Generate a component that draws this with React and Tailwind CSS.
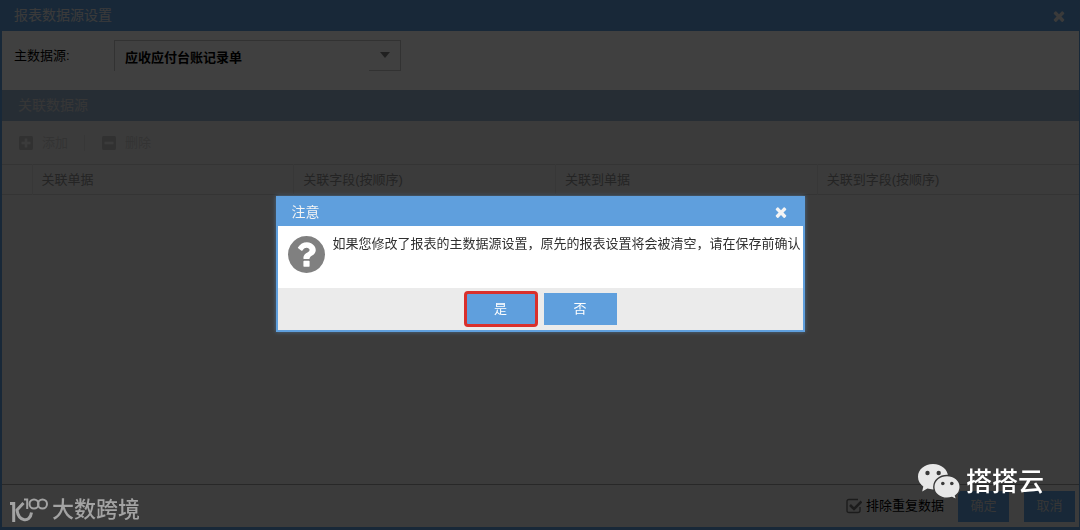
import { useState } from "react";
import { FaPlusSquare, FaMinusSquare } from "react-icons/fa";

const columns = ["关联单据", "关联字段(按顺序)", "关联到单据", "关联到字段(按顺序)"];

function CloseIcon() {
  return (
    <svg className="size-4" viewBox="0 0 1792 1792" fill="currentColor" aria-hidden="true">
      <path d="M1490 1322q0 40-28 68l-136 136q-28 28-68 28t-68-28l-294-294-294 294q-28 28-68 28t-68-28l-136-136q-28-28-28-68t28-68l294-294-294-294q-28-28-28-68t28-68l136-136q28-28 68-28t68 28l294 294 294-294q28-28 68-28t68 28l136 136q28 28 28 68t-28 68l-294 294 294 294q28 28 28 68z" />
    </svg>
  );
}

function QuestionIcon() {
  return (
    <svg className="mt-2.5 size-[37px] shrink-0 text-[#808080]" viewBox="128 128 1536 1536" fill="currentColor" aria-hidden="true">
      <path d="M1024 1376v-192q0-14-9-23t-23-9h-192q-14 0-23 9t-9 23v192q0 14 9 23t23 9h192q14 0 23-9t9-23zm256-672q0-88-55.500-163t-138.500-116-170-41q-243 0-371 213-15 24 8 42l132 100q7 6 19 6 16 0 25-12 53-68 86-92 34-24 86-24 48 0 85.500 26t37.500 59q0 38-20 61t-68 45q-63 28-115.500 86.500t-52.500 125.500v36q0 14 9 23t23 9h192q14 0 23-9t9-23q0-19 21.500-49.500t54.500-49.500q32-18 49-28.500t46-35 44.500-48 28-60.500 12.500-81zm384 192q0 209-103 385.500t-279.500 279.500-385.500 103-385.500-103-279.500-279.500-103-385.500 103-385.500 279.500-279.500 385.500-103 385.500 103 279.500 279.500 103 385.500z" />
    </svg>
  );
}

function WechatMark() {
  return (
    <svg width="42" height="36" viewBox="0 0 42 36" aria-hidden="true">
      <path
        fill="#e8e8e8"
        d="M15 0C6.500 0 0 5.600 0 12.700c0 4 2 7.500 5.300 9.800L4.200 27.500l5.200-2.900c1.800.5 3.600.8 5.600.8 8.500 0 15-5.600 15-12.700S23.500 0 15 0z"
      />
      <path
        fill="#e8e8e8"
        stroke="#3a3a3a"
        strokeWidth="1.4"
        d="M29 11.500c-7.400 0-13.200 5-13.200 11.400S21.600 34.300 29 34.300c1.800 0 3.500-.3 5-.8l4.800 2.300-1.300-4.100c3-2.100 4.700-5.200 4.700-8.800C42.200 16.500 36.300 11.500 29 11.500z"
      />
      <circle cx="9.500" cy="9" r="2.200" fill="#3a3a3a" />
      <circle cx="20.700" cy="9" r="2.200" fill="#3a3a3a" />
      <circle cx="24.800" cy="19.500" r="1.800" fill="#3a3a3a" />
      <circle cx="33.800" cy="19.500" r="1.800" fill="#3a3a3a" />
    </svg>
  );
}

function HundredMark() {
  return (
    <svg width="38" height="26" viewBox="0 0 38 26" fill="none" stroke="#a3a3a3" aria-hidden="true">
      <path strokeWidth="3" d="M0 6.500h3.700V25" />
      <path strokeWidth="3" d="M13.500 6L7 13c1.500 11.500 13 13.500 14.500 2.500" />
      <path strokeWidth="2" d="M14 2.500h3.200V12" />
      <circle cx="24" cy="7" r="4.500" strokeWidth="2" />
      <circle cx="32.500" cy="7" r="4.500" strokeWidth="2" />
    </svg>
  );
}

function DataSourceWindow() {
  const [distinct, setDistinct] = useState(true);

  return (
    <div className="flex min-h-screen flex-col border-r border-b-[3px] border-l-2 border-[#5f9fdd] bg-white text-[13px]">
      <header className="flex h-[31px] items-center justify-between bg-[#5f9fdd] px-3 text-[#e8e8e8]">
        <h1 className="text-[14px]">报表数据源设置</h1>
        <button type="button" aria-label="关闭">
          <CloseIcon />
        </button>
      </header>

      <div className="flex h-[59px] items-start pt-[9px] pl-3">
        <label htmlFor="source" className="w-[100px] pt-1.5">
          主数据源:
        </label>
        <div className="relative">
          <select
            id="source"
            className="h-[31px] w-[287px] appearance-none border-x border-t border-[#c8c8c8] bg-white px-2.5 pt-1 font-bold"
          >
            <option>应收应付台账记录单</option>
          </select>
          <span className="pointer-events-none absolute right-0 bottom-0 flex h-[31px] w-8 items-center justify-center border-b border-[#c8c8c8]">
            <svg width="10" height="6" aria-hidden="true">
              <path d="M0 0h10L5 6z" fill="#808080" />
            </svg>
          </span>
        </div>
      </div>

      <h2 className="flex h-[31px] items-center bg-[#98b4d0] pl-4 text-[14px] text-[#d8d8d8]">关联数据源</h2>

      <div className="flex h-[43px] items-center bg-[#ebebeb] pl-4 text-[#cccccc]">
        <button type="button" disabled className="flex items-center gap-2">
          <FaPlusSquare className="size-4 text-[#c4c4c4]" />
          添加
        </button>
        <span className="mx-4 h-4 w-px bg-[#dcdcdc]" />
        <button type="button" disabled className="flex items-center gap-2">
          <FaMinusSquare className="size-4 text-[#c4c4c4]" />
          删除
        </button>
      </div>

      <div className="grow bg-[#ebebeb]">
        <table className="w-full table-fixed border-collapse border-y border-[#d0d0d0]">
          <thead>
            <tr className="h-[30px]">
              <th className="w-[30px]" aria-label="序号" />
              {columns.map((col) => (
                <th key={col} className="border-l border-[#dcdcdc] pl-[9px] text-left font-normal text-[#909090]">
                  {col}
                </th>
              ))}
            </tr>
          </thead>
        </table>
      </div>

      <footer className="flex h-[43px] items-center justify-end border-t border-[#a0a0a0] bg-[#ebebeb] pr-1">
        <label className="mr-3.5 flex items-center gap-1">
          <input
            type="checkbox"
            className="peer sr-only"
            checked={distinct}
            onChange={(e) => setDistinct(e.target.checked)}
          />
          <svg width="16" height="16" viewBox="0 0 16 16" fill="none" stroke="#707070" aria-hidden="true">
            <path strokeWidth="1.400" d="M14 9v3.500q0 2-2 2H3q-2 0-2-2v-9q0-2 2-2h9" />
            {distinct && <path strokeWidth="2.600" d="M4 7l4 4 7.500-7.500" />}
          </svg>
          排除重复数据
        </label>
        <button type="button" className="mr-[15px] h-[31px] w-[51px] bg-[#5f9fdd] text-[#d8d8d8]">
          确定
        </button>
        <button type="button" className="h-[31px] w-[51px] bg-[#5f9fdd] text-[#d8d8d8]">
          取消
        </button>
      </footer>
    </div>
  );
}

function ConfirmDialog() {
  return (
    <div className="fixed inset-0 flex items-center justify-center bg-black/75 pb-0.5">
      <div
        role="alertdialog"
        aria-labelledby="confirm-title"
        className="w-[529px] border-2 border-[#5f9fdd] bg-white text-[13px] shadow-[0_0_4px_#5f9fdd80]"
      >
        <header className="flex h-7 items-center justify-between bg-[#5f9fdd] px-3.5 text-[#f4f4f4]">
          <h2 id="confirm-title" className="text-[14px]">
            注意
          </h2>
          <button type="button" aria-label="关闭">
            <CloseIcon />
          </button>
        </header>
        <div className="flex h-[62px] items-start pl-2.5">
          <QuestionIcon />
          <p className="mt-2 ml-2 whitespace-nowrap text-[#303030]">
            如果您修改了报表的主数据源设置，原先的报表设置将会被清空，请在保存前确认
          </p>
        </div>
        <footer className="flex h-[42px] items-center justify-center gap-1.5 bg-[#ebebeb] text-white">
          <button type="button" className="h-9 w-[74px] rounded border-[3px] border-[#d9302c] bg-[#5f9fdd]">
            是
          </button>
          <button type="button" className="h-8 w-[73px] bg-[#5f9fdd]">
            否
          </button>
        </footer>
      </div>
    </div>
  );
}

export default function App() {
  return (
    <div className="font-['Liberation_Sans','Noto_Sans_CJK_SC',sans-serif]">
      <DataSourceWindow />
      <ConfirmDialog />
      <div className="fixed bottom-1 left-2.5 flex items-center gap-1 text-[22px] leading-8 font-medium text-[#a3a3a3]">
        <HundredMark />
        大数跨境
      </div>
      <div className="fixed right-9 bottom-7 flex items-center gap-1.5 text-[26px] leading-10 font-medium text-white">
        <WechatMark />
        搭搭云
      </div>
    </div>
  );
}
